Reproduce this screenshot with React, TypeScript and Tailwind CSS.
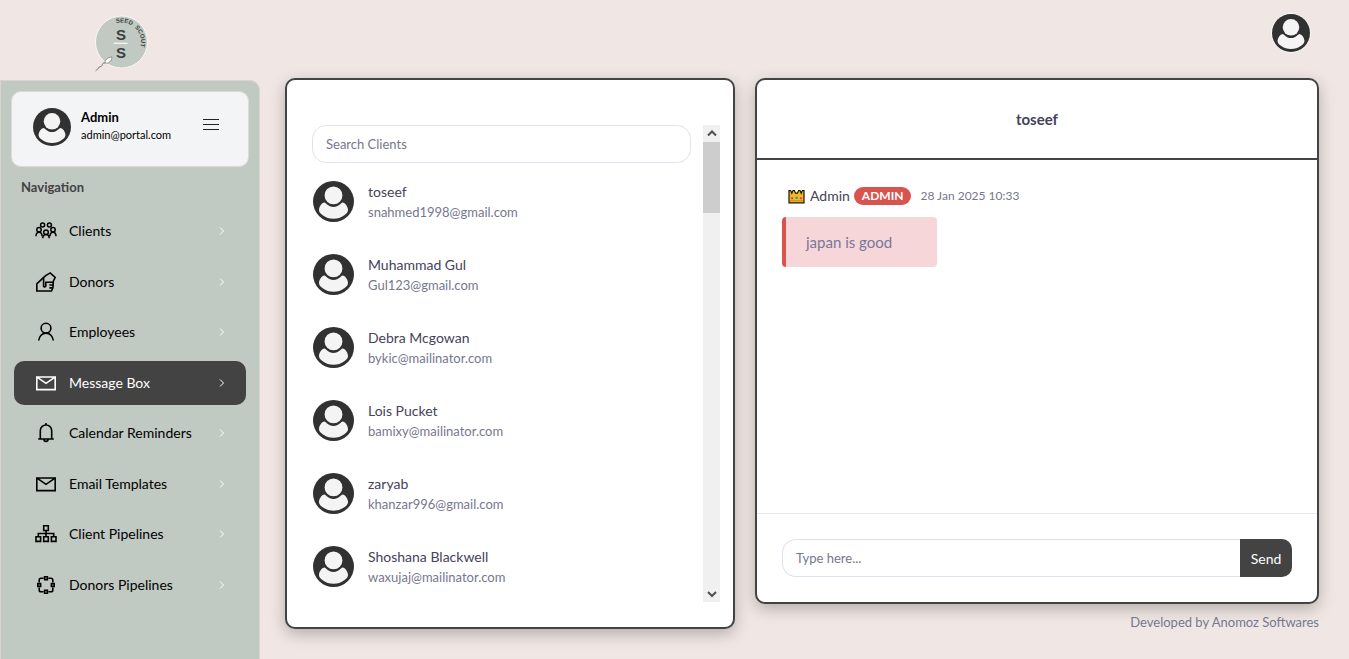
import type { ReactNode } from "react";

type NavItem = { label: string; icon: ReactNode; active?: boolean };
type Client = { name: string; email: string };

function Avatar({ className }: { className: string }) {
  return (
    <svg viewBox="0 0 41 41" className={className} aria-hidden="true">
      <circle cx="20.5" cy="20.5" r="20.5" fill="#313131" />
      <path
        d="M6 28.500C6.500 25 8.500 22 11.500 21.500c1.500 0 3.500 4.500 9 4.500s7.500-4.500 9-4.500c3 .5 5 3.500 5.500 7 .3 2.500-1.500 4.300-3.700 5.800a18 18 0 0 1-10.800 3.500 18 18 0 0 1-10.800-3.500c-2.200-1.500-4-3.300-3.700-5.800Z"
        fill="#f4f4f5"
      />
      <circle cx="20.500" cy="14.600" r="10.100" fill="#313131" />
      <circle cx="20.500" cy="14.400" r="8.900" fill="#f4f4f5" />
    </svg>
  );
}

function Icon({ children }: { children: ReactNode }) {
  return (
    <svg
      viewBox="0 0 22 22"
      className="size-[22px] shrink-0"
      fill="none"
      stroke="currentColor"
      strokeWidth="1.6"
      aria-hidden="true"
    >
      {children}
    </svg>
  );
}

const envelope = (
  <Icon>
    <path d="M1.800 5h18.400v12.600H1.800zM2 5.200l9 6.200L20 5.200" />
  </Icon>
);

const navItems: NavItem[] = [
  {
    label: "Clients",
    icon: (
      <Icon>
        <g strokeWidth="1.500">
          <circle cx="7.600" cy="5" r="2" />
          <circle cx="14.400" cy="5" r="2" />
          <circle cx="4" cy="9.800" r="2.200" />
          <circle cx="18" cy="9.800" r="2.200" />
          <circle cx="11" cy="12.300" r="2.300" />
          <path d="M1 16.200c0-2.400 1.100-4 3-4s3 1.600 3 4M15 16.200c0-2.400 1.100-4 3-4s3 1.600 3 4M7.800 18.300c0-2.300 1.200-3.700 3.200-3.700s3.200 1.400 3.200 3.700" />
        </g>
      </Icon>
    ),
  },
  {
    label: "Donors",
    icon: (
      <Icon>
        <path d="M8.400 6.600 1.800 12.900V20h14.700l1.400-3.300.5-6.700 1.800-3.500L15.200 1.900 11 4.300Z" />
        <path d="M8.600 7v8.300c.6.900 1.700.7 2.200-.2v-3.800h7.300M14.300 14h3.800M14.300 16.900h3.600" />
      </Icon>
    ),
  },
  {
    label: "Employees",
    icon: (
      <Icon>
        <circle cx="11" cy="7.200" r="4.900" />
        <path d="M3.700 19.500c.6-4 3.300-7.400 7.300-7.400s6.700 3.400 7.300 7.400" />
      </Icon>
    ),
  },
  { label: "Message Box", icon: envelope, active: true },
  {
    label: "Calendar Reminders",
    icon: (
      <Icon>
        <path d="M3.200 17h15.600M5.300 17V8.700a5.700 5.700 0 0 1 11.400 0V17M11 1v2M8.900 17.300a2.100 2.100 0 0 0 4.200 0" />
      </Icon>
    ),
  },
  { label: "Email Templates", icon: envelope },
  {
    label: "Client Pipelines",
    icon: (
      <Icon>
        <path d="M8.700 2.800h4.600v4.700H8.700zM1 13.800h4.600v4.600H1zM8.700 13.800h4.600v4.600H8.700zM16.400 13.800H21v4.600h-4.600zM11 7.500v6.300M3.300 13.800v-3.300h15.400v3.300" />
      </Icon>
    ),
  },
  {
    label: "Donors Pipelines",
    icon: (
      <Icon>
        <path d="M9.600 2.800h2.800v2.800H9.600zM9.600 16.400h2.800v2.800H9.600zM2.800 9.600h2.800v2.800H2.800zM16.400 9.600h2.800v2.800h-2.800z" />
        <path d="M8.600 4.200H6Q4.200 4.200 4.200 6v2.600M13.400 4.200H16q1.800 0 1.800 1.800v2.600M4.200 13.400V16q0 1.800 1.800 1.800h2.600M17.800 13.400V16q0 1.800-1.800 1.800h-2.600" />
      </Icon>
    ),
  },
];

const clients: Client[] = [
  { name: "toseef", email: "snahmed1998@gmail.com" },
  { name: "Muhammad Gul", email: "Gul123@gmail.com" },
  { name: "Debra Mcgowan", email: "bykic@mailinator.com" },
  { name: "Lois Pucket", email: "bamixy@mailinator.com" },
  { name: "zaryab", email: "khanzar996@gmail.com" },
  { name: "Shoshana Blackwell", email: "waxujaj@mailinator.com" },
];

function Logo() {
  return (
    <svg viewBox="0 0 60 60" className="size-[60px]" role="img" aria-label="Seed Scout">
      <defs>
        <path id="logo-arc" d="M11 30A19.500 19.500 0 0 1 50 30A19.500 19.500 0 0 1 30.500 49.500" />
      </defs>
      <circle cx="30.500" cy="30" r="26" fill="#c0c9c2" stroke="#faf7f5" strokeWidth="1" />
      <g fill="#3c403e" className="font-['Liberation_Sans',sans-serif] font-bold">
        <text x="30" y="28" fontSize="15" textAnchor="middle">
          S
        </text>
        <text x="30" y="46" fontSize="15" textAnchor="middle">
          S
        </text>
        <text fontSize="6">
          <textPath href="#logo-arc" startOffset="25">
            SEED&#160; SCOUT
          </textPath>
        </text>
      </g>
      <path d="M22.500 31.300h14" stroke="#faf7f5" strokeWidth="1.300" />
      <path
        d="M14 51c-.5-2.800 2-5.500 7-6-.4 4.200-3 7-7 6Z"
        fill="#fbfaf8"
        stroke="#66605c"
        strokeWidth=".6"
      />
      <path
        d="M14 51c-2.500-.4-2.500 1-3 2.600s-2.800.4-3.600 2.400-1.600 1.500-2.800 2.800"
        fill="none"
        stroke="#66605c"
        strokeWidth=".9"
      />
    </svg>
  );
}

function Crown() {
  return (
    <svg viewBox="0 0 17 15" className="mr-[5px] h-[15px] w-[17px]" aria-hidden="true">
      <path
        d="M1 13.800V1.500h1.600l1.200 2.700L5 1.500h1.400l1.100 2.700h2l1.100-2.700H12l1.200 2.700 1.200-2.700H16v12.300Z"
        fill="#f5b91f"
        stroke="#1c1408"
        strokeWidth="1.200"
      />
      <path d="M2 11.800h13" stroke="#c98b0c" />
      <path d="M3.200 8.200h2v2h-2zM11.800 8.200h2v2h-2z" fill="#d63a7d" />
      <path d="M7.500 7.700h2.200v2.200H7.500z" fill="#159fb5" />
    </svg>
  );
}

function Chevron({ d, className }: { d: string; className: string }) {
  return (
    <svg viewBox="0 0 10 10" className={className} fill="none" stroke="currentColor" aria-hidden="true">
      <path d={d} />
    </svg>
  );
}

function Sidebar() {
  return (
    <aside className="flex w-[260px] shrink-0 flex-col">
      <a href="#" className="flex h-20 items-start pl-[91px] pt-3">
        <Logo />
      </a>
      <div className="flex-1 rounded-tr-[10px] border border-b-0 border-[#dbd3cf] bg-[#c0c9c2] px-[10px] pt-[10px]">
        <div className="flex h-[76px] items-start rounded-[10px] border border-[#dfd9d6] bg-[#f3f4f6] pl-[21px] pr-[29px] pt-4">
          <Avatar className="size-[38px]" />
          <div className="ml-[10px] flex-1 text-black">
            <p className="text-[13px] font-bold leading-[18px]">Admin</p>
            <p className="text-[11px] leading-[18px]">admin@portal.com</p>
          </div>
          <button type="button" aria-label="Toggle menu" className="mt-[11px] flex w-4 flex-col gap-1">
            <span className="h-px w-full bg-[#222]" />
            <span className="h-px w-full bg-[#222]" />
            <span className="h-px w-full bg-[#222]" />
          </button>
        </div>
        <h2 className="mt-[11px] pl-[10px] text-[13px] font-bold leading-[18px] text-[#434343]">Navigation</h2>
        <nav className="mt-[13px] flex h-[398px] flex-col justify-between px-[3px]">
          {navItems.map((item) => (
            <a
              key={item.label}
              href="#"
              className={
                item.active
                  ? "flex h-11 items-center rounded-[10px] bg-[#434343] pl-[21px] pr-5 text-white"
                  : "flex h-11 items-center rounded-[10px] pl-[21px] pr-5 text-black"
              }
            >
              {item.icon}
              <span className="ml-3 flex-1 text-[14px] leading-5">{item.label}</span>
              <Chevron d="M4 1.500 7.500 5 4 8.500" className="size-[10px] text-white" />
            </a>
          ))}
        </nav>
      </div>
    </aside>
  );
}

function ClientsPanel() {
  return (
    <section className="flex w-[450px] shrink-0 rounded-[10px] border-2 border-[#434343] bg-white pb-[25px] pl-[25px] pr-[13px] pt-[45px] shadow-[0_5px_15px_rgba(0,0,0,0.25)]">
      <div className="flex-1 pr-3">
        <input
          type="text"
          aria-label="Search Clients"
          placeholder="Search Clients"
          className="h-[38px] w-full rounded-[14px] border border-[#e1e1eb] px-[13px] text-[13px] text-[#4a4860] outline-none placeholder:text-[#76778f]"
        />
        <ul className="mt-[18px] flex flex-col gap-8 pb-[15px]">
          {clients.map((client) => (
            <li key={client.email} className="flex h-[41px]">
              <Avatar className="ml-px size-[41px]" />
              <div className="ml-[14px] pt-px">
                <p className="text-[14px] leading-5 text-[#45425a]">{client.name}</p>
                <p className="text-[13px] leading-5 text-[#76778f]">{client.email}</p>
              </div>
            </li>
          ))}
        </ul>
      </div>
      <div className="flex w-[17px] flex-col bg-[#f0f0f0] text-[#505050]">
        <div className="flex h-[17px] items-center justify-center">
          <Chevron d="M1 6.500l4-4 4 4" className="size-[10px] stroke-2" />
        </div>
        <div className="h-[71px] bg-[#cdcdcd]" />
        <div className="mt-auto flex h-[17px] items-center justify-center">
          <Chevron d="M1 3l4 4 4-4" className="size-[10px] stroke-2" />
        </div>
      </div>
    </section>
  );
}

function ChatPanel() {
  return (
    <section className="flex h-[526px] flex-col rounded-[10px] border-2 border-[#434343] bg-white shadow-[0_5px_15px_rgba(0,0,0,0.25)]">
      <header className="flex h-20 items-center justify-center border-b-2 border-[#434343]">
        <h1 className="text-[15px] font-bold leading-5 text-[#45425a]">toseef</h1>
      </header>
      <div className="flex-1 px-[25px] pt-[26px]">
        <div className="flex h-5 items-center pl-[6px]">
          <Crown />
          <span className="text-[14px] leading-5 text-[#45425a]">Admin</span>
          <span className="ml-1 rounded-full bg-[#d9534f] px-2 text-[12px] font-bold leading-[18px] text-white">
            ADMIN
          </span>
          <time className="ml-[9px] text-[12px] leading-5 text-[#76778f]">28 Jan 2025 10:33</time>
        </div>
        <p className="mt-[11px] h-[50px] w-[155px] rounded-[4px] border-l-4 border-[#d9534f] bg-[#f7d6d9] pl-5 text-[15px] leading-[50px] text-[#76779a]">
          japan is good
        </p>
      </div>
      <form className="flex border-t border-[#e9eaec] p-[25px]" onSubmit={(event) => event.preventDefault()}>
        <input
          type="text"
          aria-label="Message"
          placeholder="Type here..."
          className="h-[38px] min-w-0 flex-1 rounded-l-[14px] border border-r-0 border-[#e1e1eb] px-[13px] text-[13px] text-[#4a4860] outline-none placeholder:text-[#76778f]"
        />
        <button type="submit" className="w-[52px] rounded-r-[10px] bg-[#434343] text-[14px] text-white">
          Send
        </button>
      </form>
    </section>
  );
}

export default function App() {
  return (
    <div className="flex min-h-screen bg-[#f0e7e4] font-['Lato',sans-serif]">
      <Sidebar />
      <div className="flex min-w-0 flex-1 flex-col pl-[25px] pr-[30px]">
        <header className="flex h-[78px] items-start justify-end pr-2 pt-[13px]">
          <button type="button" aria-label="Account" className="rounded-full border border-[#faf7f6]">
            <Avatar className="size-[38px]" />
          </button>
        </header>
        <main className="flex items-start gap-5">
          <ClientsPanel />
          <div className="min-w-0 flex-1">
            <ChatPanel />
            <footer className="mt-2 text-right text-[13px] leading-5 text-[#76778f]">
              Developed by Anomoz Softwares
            </footer>
          </div>
        </main>
      </div>
    </div>
  );
}
